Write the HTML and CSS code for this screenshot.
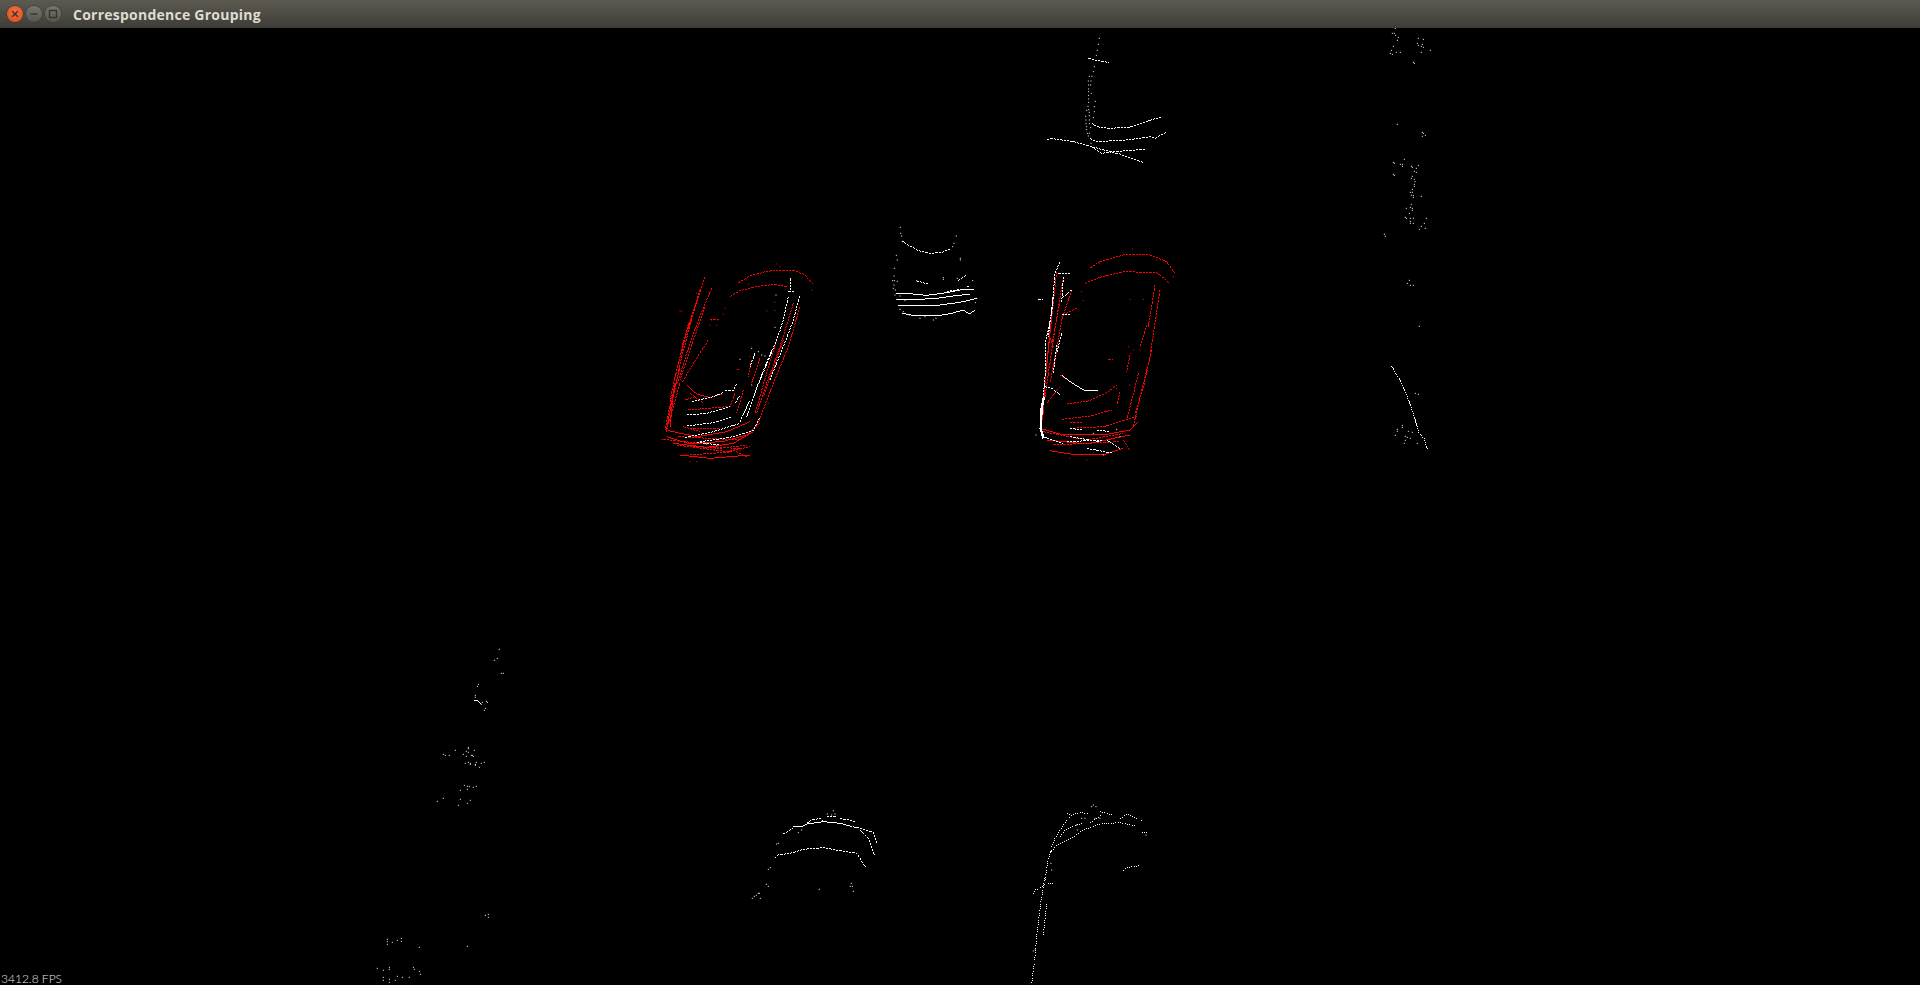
FILE: index.html
```html
<!DOCTYPE html>
<html lang="en">
<head>
<meta charset="utf-8">
<title>Correspondence Grouping</title>
<link rel="stylesheet" href="styles.css">
</head>
<body>
<div class="window">
  <header class="titlebar">
    <div class="controls">
      <span class="btn btn-close"><svg viewBox="0 0 10 10" class="glyph"><path d="M2.2 2.2 7.8 7.8M7.8 2.2 2.2 7.8"/></svg></span>
      <span class="btn"><svg viewBox="0 0 10 10" class="glyph"><path d="M1.5 5H8.5"/></svg></span>
      <span class="btn"><svg viewBox="0 0 10 10" class="glyph"><rect x="1.5" y="1.5" width="7" height="7"/></svg></span>
    </div>
    <div class="title">Correspondence Grouping</div>
  </header>
  <main class="viewport">
    <svg class="cloud" viewBox="0 28 1920 957" preserveAspectRatio="none" aria-hidden="true">
      <!-- left phone -->
      <g transform="translate(640 240) scale(.33333)">
        <path class="red solid" d="M140 435L170 462 210 473 245 462 M80 590L150 612 250 604 320 585 360 548 M85 572L170 590 260 575 330 545 M100 610L200 622 280 610 340 575 M120 645L210 655 270 650 330 645 M105 430L85 540 78 575 M120 380L100 460 90 560 M130 300L125 340"/>
        <path class="red dash" d="M295 128L330 108 375 95 410 90 465 92 495 105 M270 170L300 152 350 140 400 133 445 140 M195 110L165 205 130 310 100 430 M215 145L175 240 140 340 112 430 M205 300L160 370 125 430 M495 105L520 135 M150 460L190 490 M145 510L260 500 M150 565L240 565 M285 460L270 500 M310 450L290 520 M335 360L325 410 M360 355L335 430 M410 300L380 400 345 520 M460 190L420 320 380 430 350 520 M480 200L445 320 400 430 350 560 M290 388H300 M160 620L300 625 M200 630L320 615 M145 250L115 370 90 480 M195 200L150 330 120 420 M210 240H240 M120 430L80 570 M70 598L130 605 200 612 M110 615L260 635 330 620 M115 590L300 600 M280 630L320 650 M150 645L280 635 M165 470L135 480 M430 300L395 400 370 470 M180 150L135 290 M155 240L125 350 100 470 M95 470L75 570 M130 560L180 575"/>
        <path class="red dots" d="M120 212h.01M125 215h.01M255 205h.01M250 222h.01M405 187h.01M380 213h.01M405 212h.01M215 240h.01M235 240h.01M210 255h.01M230 255h.01M300 128h.01M320 120h.01M325 132h.01M170 160h.01M410 72h.01M420 80h.01M515 150h.01M510 120h.01M65 598h.01M170 665h.01M330 350h.01M360 375h.01M385 490h.01M300 630h.01M130 320h.01M125 330h.01M135 305h.01M150 665h.01"/>
        <path class="white dash" d="M155 485L220 470 250 458 M255 452L280 452 290 432 M140 525L200 520 270 500 M285 490L300 465 M140 558L220 548 275 532 M135 592L220 575 300 550 M170 607L270 592 340 572 358 535 M300 545L330 480 M320 530L355 430 395 330 M340 470L375 385 410 300 430 240 445 170 M390 420L430 320 460 240 480 165 M345 340L330 380 M445 155H465 M452 115V150 M180 608L240 615"/>
        <path class="white dots" d="M335 325h.01M300 358h.01M355 335h.01M375 348h.01M408 165h.01M405 262h.01M335 435h.01M365 345h.01M230 618h.01M200 612h.01"/>
      </g>
      <!-- right phone -->
      <g transform="translate(1020 240) scale(.33333)">
        <path class="red solid" d="M120 405L150 425 190 450 M60 565L130 585 250 585 330 570 355 545 M80 600L200 612 330 585 M90 632L170 645 250 645 310 625 M100 320L85 280 M95 230L75 420 68 540"/>
        <path class="red dash" d="M240 65L320 42 390 45 M240 112L310 95 410 98 M210 85L240 65 M390 45L440 65 465 100 M195 130L240 112 M410 98L445 125 M420 150L405 250 390 350 365 450 340 560 M405 135L385 260 M380 255L360 320 M355 400L320 540 M330 345L320 395 M300 455L290 495 M110 95L90 280 70 480 M130 110L100 300 75 470 M155 150L125 240 100 390 M140 492L210 482 265 455 290 435 M125 538L210 528 275 510 M150 548H185 M150 565L250 560 300 545 350 530 M120 440L80 490 M170 205L130 225 M265 358H280 M395 330L370 440 345 520 M70 575L200 600 310 580 M100 615L300 605 M120 180L95 320 M105 350L90 430 M310 600L330 630"/>
        <path class="red dots" d="M185 155h.01M190 182h.01M330 178h.01M370 178h.01M238 70h.01M215 80h.01M338 27h.01M460 110h.01M445 128h.01M410 60h.01M200 660h.01M150 655h.01M330 435h.01M290 445h.01M325 320h.01M340 330h.01M360 330h.01M333 340h.01"/>
        <path class="white thick" d="M72 470L65 505 62 565 70 595"/>
        <path class="white solid" d="M125 405L150 425 190 450 235 453"/>
        <path class="white dash" d="M120 65L105 100 95 220 78 300 78 370 70 470 M115 100H150 M130 110L125 190 M155 150L125 175 M125 223L150 225 M125 280L110 340 M100 170L85 290 M110 315L100 400 M75 440L95 445 120 465 M150 565L190 570 M230 570L270 575 M150 590L240 605 M260 600L300 625 M140 605L250 600 M70 590L130 612 M200 625L280 640 M55 178H70"/>
        <path class="white dots" d="M48 585h.01M57 178h.01M190 595h.01M220 580h.01M290 568h.01M300 590h.01M250 645h.01"/>
      </g>
      <!-- centre object -->
      <g transform="translate(870 210) scale(.33333)">
        <path class="white dash" d="M95 92L120 108 145 122 180 130 215 127 240 118"/>
        <path class="white solid" d="M78 250H110L170 256 230 248 270 240 312 238 M80 268H150L200 265 250 258 300 252 M85 286L150 288 210 285 270 277 320 265 M95 310L130 316 200 318 245 310 280 300 298 312 316 300"/>
        <path class="white dash" d="M140 213L175 222 M230 245L270 238 M265 212L290 195 M290 230H298"/>
        <path class="white dots" d="M91 52h.01M92 70h.01M95 78h.01M97 95h.01M259 78h.01M252 100h.01M248 110h.01M79 136h.01M82 150h.01M73 175h.01M72 198h.01M68 212h.01M82 214h.01M73 212h.01M72 225h.01M70 235h.01M76 240h.01M75 255h.01M80 268h.01M90 258h.01M105 272h.01M90 298h.01M100 305h.01M140 212h.01M220 203h.01M220 208h.01M271 145h.01M271 150h.01M262 205h.01M308 212h.01M316 278h.01M320 265h.01M150 325h.01M190 330h.01M165 320h.01M198 325h.01M118 315h.01"/>
      </g>
      <!-- top wall -->
      <g transform="translate(1030 25) scale(.33333)">
        <path class="white dash" d="M175 100L195 105 237 113 M52 344L62 340 130 350 185 365 260 385 338 412 M185 295L200 305 240 310 300 306 395 275 M180 340L200 350 290 345 360 335 375 340 412 320 M185 365L215 385 250 380 345 373"/>
        <path class="white dots" d="M208 40h.01M205 58h.01M202 76h.01M199 91h.01M193 125h.01M190 140h.01M186 154h.01M178 154h.01M183 168h.01M175 168h.01M176 180h.01M182 180h.01M176 192h.01M176 200h.01M184 205h.01M176 211h.01M176 222h.01M176 232h.01M196 229h.01M193 245h.01M174 244h.01M176 254h.01M170 256h.01M193 260h.01M178 262h.01M167 274h.01M178 272h.01M190 278h.01M168 285h.01M178 285h.01M168 296h.01M178 296h.01M170 305h.01M182 308h.01M170 314h.01M172 325h.01M178 325h.01M175 333h.01M182 340h.01M183 355h.01"/>
      </g>
      <!-- right wall -->
      <g transform="translate(1370 25) scale(.33333)">
        <path class="white dash fine" d="M64 1022L90 1065 110 1110 130 1165 146 1222 162 1240 172 1272"/>
        <path class="white dots" d="M76 10h.01M67 25h.01M73 25h.01M77 31h.01M85 37h.01M82 46h.01M70 64h.01M64 76h.01M61 85h.01M67 88h.01M79 82h.01M91 82h.01M145 40h.01M160 43h.01M142 55h.01M145 61h.01M157 58h.01M154 64h.01M160 67h.01M181 76h.01M154 82h.01M130 112h.01M133 115h.01M82 298h.01M157 322h.01M160 325h.01M166 331h.01M157 334h.01M103 403h.01M70 412h.01M73 415h.01M91 418h.01M97 418h.01M97 424h.01M124 424h.01M127 427h.01M145 421h.01M139 430h.01M133 439h.01M139 442h.01M70 448h.01M73 451h.01M127 454h.01M124 460h.01M133 463h.01M135 470h.01M133 478h.01M133 484h.01M127 493h.01M121 502h.01M127 502h.01M124 511h.01M130 511h.01M130 517h.01M154 514h.01M124 538h.01M109 550h.01M121 547h.01M127 550h.01M127 556h.01M118 565h.01M106 577h.01M109 580h.01M121 580h.01M130 580h.01M121 589h.01M121 595h.01M130 595h.01M169 580h.01M163 595h.01M154 604h.01M148 613h.01M166 610h.01M43 628h.01M46 634h.01M118 766h.01M112 775h.01M121 781h.01M130 781h.01M148 904h.01M136 1105h.01M145 1108h.01M97 1201h.01M97 1207h.01M82 1213h.01M82 1219h.01M115 1219h.01M127 1222h.01M76 1231h.01M106 1234h.01M112 1237h.01M121 1240h.01M106 1246h.01M103 1255h.01M142 1255h.01"/>
      </g>
      <!-- bottom centre -->
      <g transform="translate(740 800) scale(.33333)">
        <path class="white solid" d="M160 80L190 78 200 72 250 65 300 70 330 78"/>
        <path class="white dash" d="M130 102L160 85 M330 78L360 85 400 97 412 132 M105 175L115 165 160 158 190 148 250 143 300 152 350 160 376 200 M200 70L215 60 240 55 250 65 M260 50L290 50 M300 55L345 65 M360 90L385 115 403 165"/>
        <path class="white dots" d="M280 32h.01M262 42h.01M275 45h.01M285 42h.01M110 132h.01M115 130h.01M175 98h.01M185 90h.01M85 208h.01M91 203h.01M79 253h.01M85 259h.01M37 295h.01M43 289h.01M49 286h.01M55 280h.01M58 280h.01M61 295h.01M238 268h.01M334 250h.01M331 259h.01M337 259h.01M340 274h.01"/>
      </g>
      <!-- bottom right -->
      <g transform="translate(1020 800) scale(.33333)">
        <path class="white dash sparse" d="M90 160L110 135 150 118 190 90 240 72 300 68 345 78 M90 155L105 115 135 68 155 45 180 38 205 40 M290 65L320 42 370 65 M75 240L85 175 95 150 M35 550L45 470 52 390 62 310 75 230 M70 405L80 310 M60 265L80 250 105 252 M140 40L150 45 M240 35L275 45 M210 68L245 45 M120 110L135 90 185 70 M305 217L320 203 358 197 M38 283L45 270 55 270 M65 445L77 437 M365 97L385 97"/>
        <path class="white dots" d="M215 20h.01M220 15h.01M228 20h.01M185 55h.01M170 75h.01M172 90h.01M240 55h.01M225 55h.01M195 55h.01M378 105h.01M95 210h.01M93 190h.01M40 453h.01M46 450h.01"/>
      </g>
      <!-- bottom left -->
      <g transform="translate(360 640) scale(.33333)">
        <path class="white solid" d="M343 181H350L362 190"/>
        <path class="white dots" d="M418 28h.01M412 55h.01M403 61h.01M424 100h.01M430 100h.01M355 133h.01M352 139h.01M346 166h.01M346 172h.01M364 193h.01M367 187h.01M379 184h.01M382 187h.01M376 205h.01M373 211h.01M325 323h.01M325 326h.01M343 331h.01M286 331h.01M319 334h.01M325 337h.01M250 343h.01M256 346h.01M268 346h.01M310 343h.01M319 349h.01M334 346h.01M337 346h.01M340 349h.01M316 370h.01M325 367h.01M331 370h.01M331 373h.01M349 367h.01M346 373h.01M346 376h.01M364 370h.01M373 367h.01M358 382h.01M313 436h.01M322 439h.01M328 439h.01M349 439h.01M340 442h.01M322 448h.01M301 451h.01M250 475h.01M232 484h.01M301 478h.01M331 481h.01M322 490h.01M295 496h.01M376 826h.01M385 823h.01M385 832h.01M124 895h.01M82 898h.01M112 901h.01M124 904h.01M82 905h.01M97 907h.01M82 913h.01M178 922h.01M322 919h.01M160 982h.01M88 982h.01M52 985h.01M88 988h.01M163 988h.01M70 991h.01M178 994h.01M181 1003h.01M112 1009h.01M70 1012h.01M127 1012h.01M148 1012h.01M88 1018h.01M70 1021h.01M106 1021h.01M88 1027h.01"/>
      </g>
    </svg>
    <div class="fps">3412.8 FPS</div>
  </main>
</div>
</body>
</html>
```
FILE: styles.css
```css
* { box-sizing: border-box; }
html, body { margin: 0; height: 100%; background: #000; overflow: hidden; }
.window { display: flex; flex-direction: column; height: 985px; }
.titlebar {
  flex: 0 0 28px;
  display: flex;
  align-items: center;
  padding-left: 7px;
  background: linear-gradient(#5c5a50, #3d3c37);
}
.controls { display: flex; gap: 3px; width: 66px; }
.btn {
  width: 16px;
  height: 16px;
  border-radius: 50%;
  display: flex;
  align-items: center;
  justify-content: center;
  background: linear-gradient(#77766f, #55544e);
  box-shadow: 0 0 0 .5px #33322e;
}
.btn-close { background: radial-gradient(circle at 50% 35%, #f4703c, #de4a1c); }
.glyph { width: 10px; height: 10px; fill: none; stroke: #35342f; stroke-width: 1.4; }
.title {
  font: 700 14px "Open Sans", "Liberation Sans", sans-serif;
  letter-spacing: .24px;
  color: #dfdbd2;
  white-space: nowrap;
}
.viewport { flex: 1; position: relative; background: #000; overflow: hidden; }
.cloud { display: block; width: 100%; height: 100%; }
.cloud path { fill: none; stroke-width: 3; shape-rendering: crispEdges; }
.red { stroke: #ff0000; }
.white { stroke: #ffffff; }
.dash { stroke-dasharray: 7 3; }
.dash.fine { stroke-dasharray: 4 2; }
.dash.sparse { stroke-dasharray: 3 4; }
.cloud .thick { stroke-width: 7; }
.dots { stroke-linecap: square; }
.fps {
  position: absolute;
  left: 1px;
  bottom: 0;
  font: 300 12px/13px "Lato", "Liberation Sans", sans-serif;
  color: #e4e4e4;
  white-space: nowrap;
}
```
